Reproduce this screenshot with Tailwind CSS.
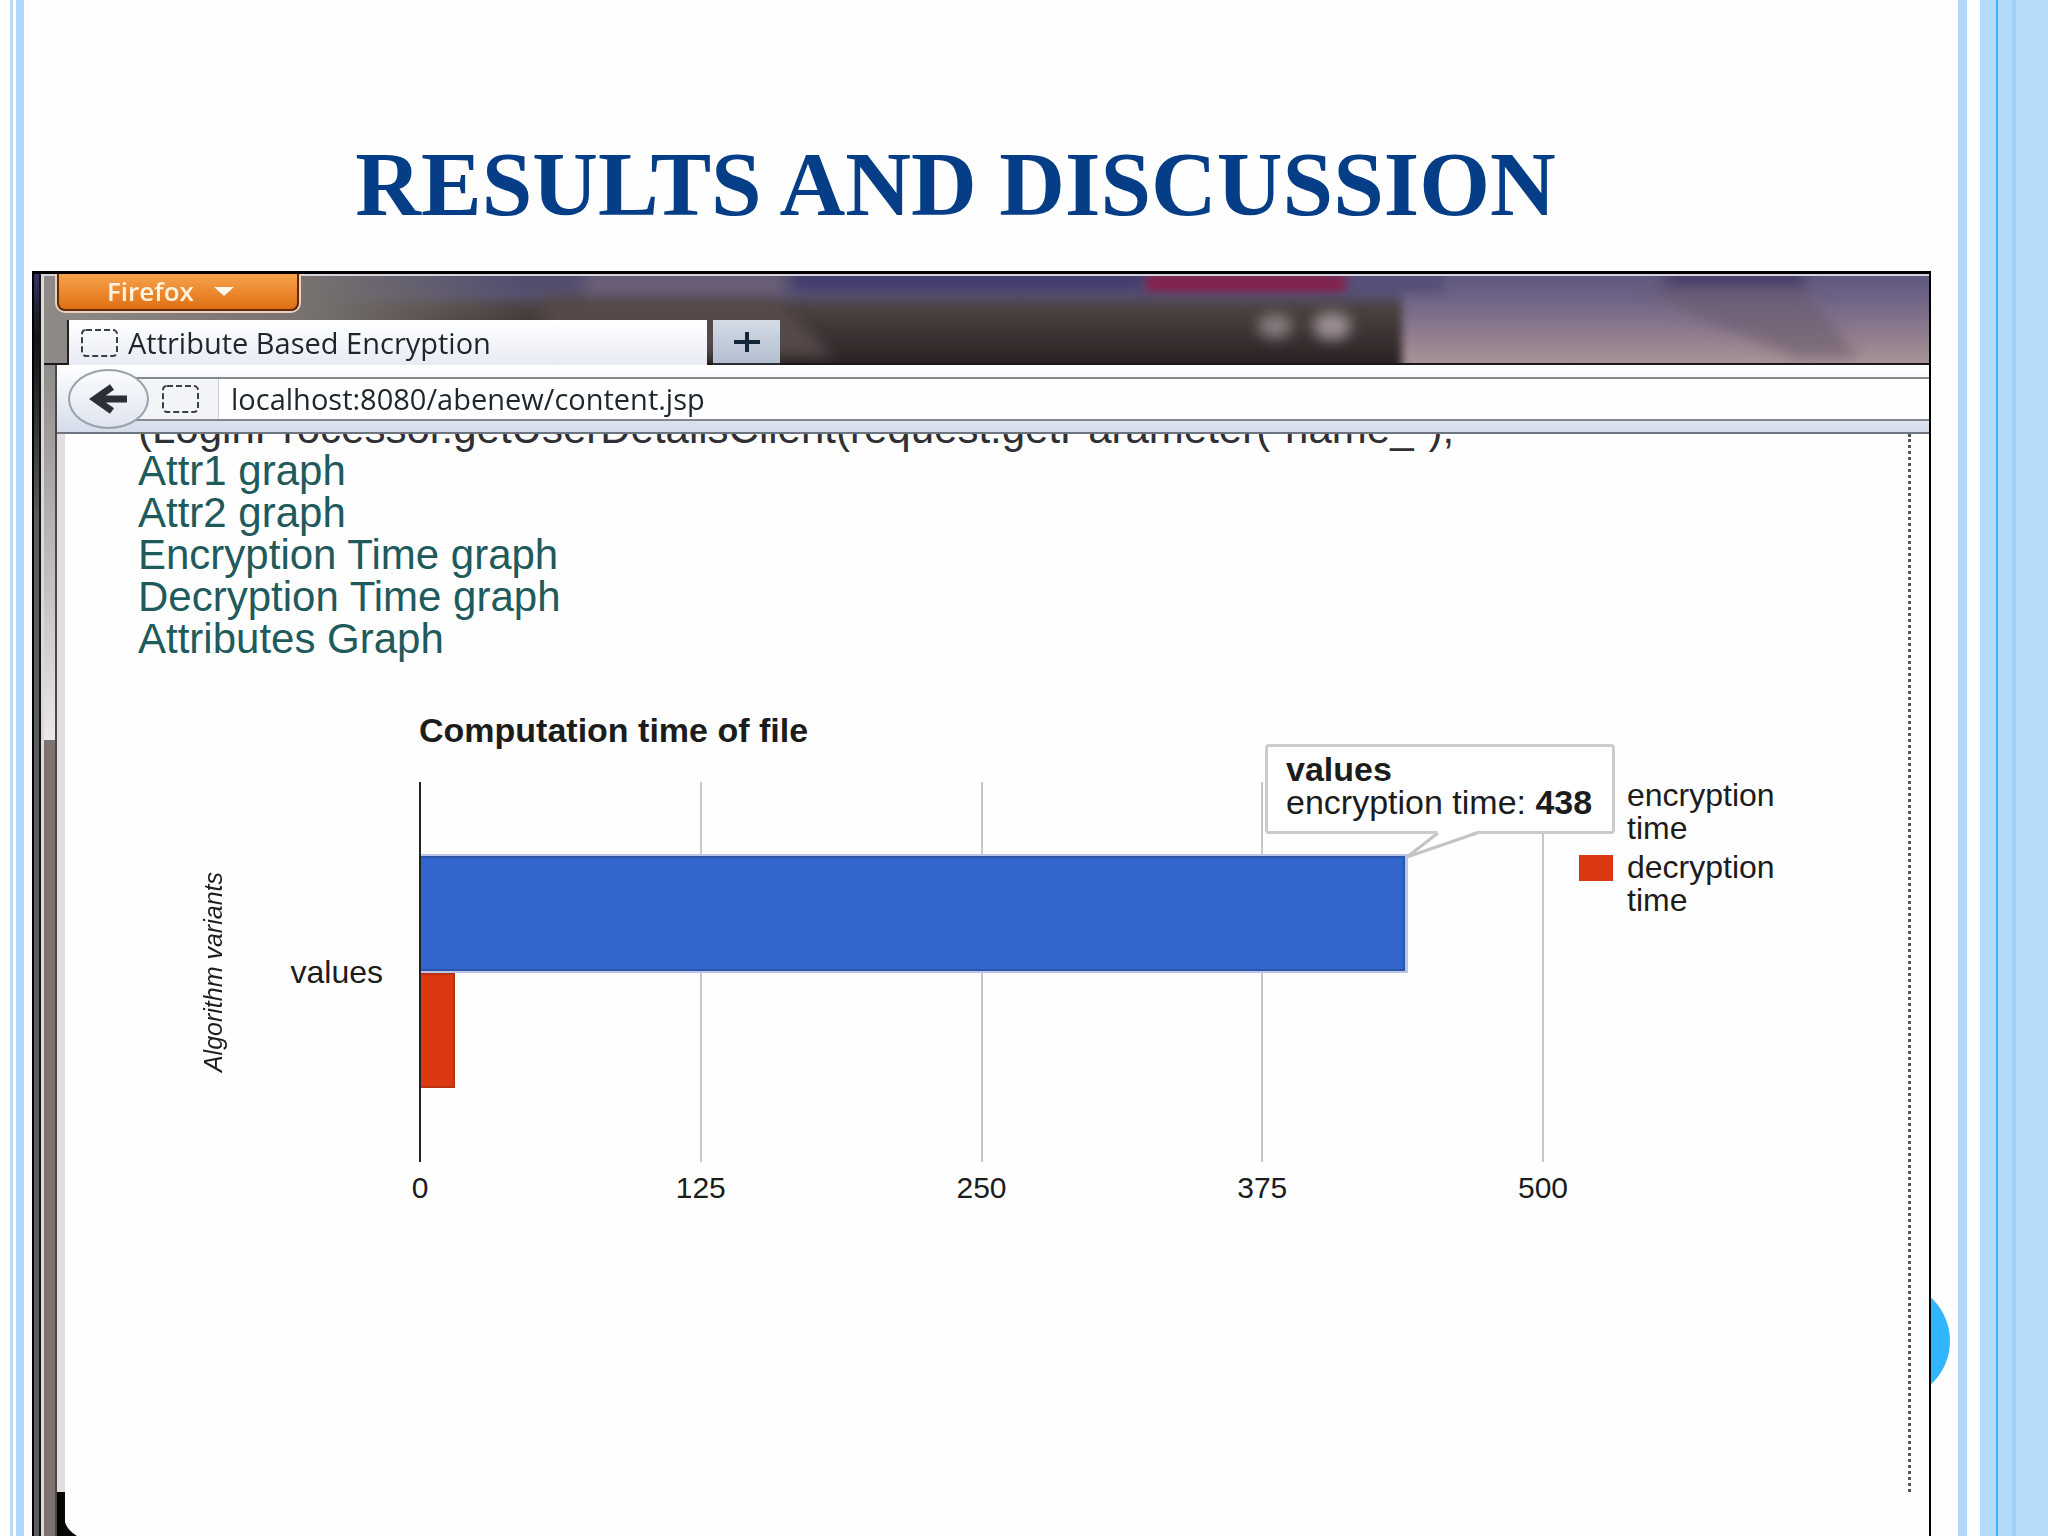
<!DOCTYPE html>
<html lang="en">
<head>
<meta charset="utf-8">
<meta name="viewport" content="width=device-width, initial-scale=1">
<title>Results and Discussion</title>
<script src="https://cdn.jsdelivr.net/npm/@tailwindcss/browser@4"></script>
</head>
<body class="bg-[#fefefe]">
<div class="flex h-screen overflow-hidden">
  <!-- left slide stripes -->
  <div class="flex w-6 shrink-0 justify-end gap-[3px]" aria-hidden="true">
    <div class="w-[3px] bg-[#b5dcfc]"></div>
    <div class="w-2 bg-[#b0d8fc]"></div>
  </div>

  <main class="relative flex min-w-0 flex-1 flex-col pl-2 pr-[27px]">
    <h1 class="h-[271px] shrink-0 pt-[140px] pr-[52px] text-center font-['Liberation_Serif',serif] text-[91px] leading-[90px] font-bold whitespace-nowrap text-[#053e87]">RESULTS AND DISCUSSION</h1>
    <div class="absolute top-[1282px] right-2 size-[118px] rounded-full bg-[#31b5ff]" aria-hidden="true"></div>

    <!-- browser window -->
    <section class="relative flex min-h-0 flex-1 overflow-hidden border-t-[3px] border-r-2 border-black bg-[#fefefe]">
      <div class="flex shrink-0" aria-hidden="true">
        <div class="w-[2px] bg-black"></div>
        <div class="w-[5px] bg-linear-to-b from-[#37335f] from-0% via-[#141418] via-5% to-[#5c5f60] to-20%"></div>
        <div class="w-[2px] bg-[#111]"></div>
        <div class="w-[3px] bg-[#dcdad8]"></div>
      </div>

      <div class="flex min-w-0 flex-1 flex-col">
        <header class="relative h-[91px] shrink-0 overflow-hidden">
          <!-- blurred glass behind the title bar -->
          <svg class="absolute inset-0 size-full" viewBox="0 0 1885 91" preserveAspectRatio="none" aria-hidden="true">
            <defs>
              <linearGradient id="glass" x1="0" y1="0" x2="0" y2="1"><stop offset="0" stop-color="#4f4c70"/><stop offset=".22" stop-color="#55506e"/><stop offset=".38" stop-color="#4a4240"/><stop offset="1" stop-color="#2a2022"/></linearGradient>
              <linearGradient id="dusk" x1="0" y1="0" x2="0" y2="1"><stop offset="0" stop-color="#575078"/><stop offset=".3" stop-color="#6b6284"/><stop offset=".55" stop-color="#8d7a8e"/><stop offset=".8" stop-color="#a99795"/><stop offset="1" stop-color="#b29493"/></linearGradient>
              <linearGradient id="left" x1="0" y1="0" x2="1" y2="0"><stop offset="0" stop-color="#8e8a88"/><stop offset=".55" stop-color="#77716f"/><stop offset="1" stop-color="#77716f" stop-opacity="0"/></linearGradient>
              <filter id="soft" x="-20%" y="-60%" width="140%" height="220%"><feGaussianBlur stdDeviation="7"/></filter>
              <filter id="edge" x="-5%" y="-30%" width="110%" height="160%"><feGaussianBlur stdDeviation="4"/></filter>
            </defs>
            <rect width="1885" height="91" fill="url(#glass)"/>
            <rect width="480" height="91" fill="url(#left)"/>
            <g filter="url(#soft)">
              <rect x="540" y="0" width="200" height="20" fill="#6d6078"/>
              <path d="M500 22h230l60 60H500z" fill="#55494a"/>
              <rect x="750" y="-6" width="350" height="20" fill="#403a70"/>
            </g>
            <rect x="1358" y="-20" width="600" height="140" fill="url(#dusk)" filter="url(#edge)"/>
            <rect x="1290" y="-10" width="110" height="28" fill="#575078" filter="url(#edge)"/>
            <g filter="url(#soft)">
              <path d="M1630-6h125l10 18h-150z" fill="#453a68"/>
              <path d="M1600 14h160l55 70h-60l-100-40z" fill="#6a5a6c" opacity=".6"/>
              <ellipse cx="1231" cy="52" rx="17" ry="12" fill="#8a7f80"/>
              <ellipse cx="1288" cy="52" rx="19" ry="14" fill="#9b8f92"/>
            </g>
            <rect x="1102" y="0" width="200" height="18" fill="#83204f" filter="url(#edge)"/>
            <rect y="0" width="1885" height="2" fill="#d6d2dc"/>
            <rect y="89" width="1885" height="2" fill="#1d1718"/>
          </svg>

          <div class="relative flex h-full flex-col justify-between pl-[13px]">
            <button class="flex h-[37px] w-[242px] items-center justify-start gap-5 rounded-b-lg border-2 border-t-0 border-[#5d2a12] bg-linear-to-b from-[#f6a24a] to-[#e0700c] pb-px pl-12 font-['Open_Sans',sans-serif] text-[26px] leading-[34px] font-semibold text-[#fff3e0] shadow-[0_0_0_2px_#f3cdb4]">Firefox
              <svg class="h-[9px] w-5" viewBox="0 0 20 9" aria-hidden="true"><path d="M0 0h20L10 9z" fill="#fff8ec"/></svg>
            </button>
            <div class="flex h-[45px] items-end gap-[6px] pl-[10px]">
              <button class="flex h-full w-[640px] items-center gap-[10px] border-l-2 border-[#222] bg-linear-to-b from-white to-[#e8ebf4] pl-3 font-['Open_Sans',sans-serif] text-[29px] leading-[36px] whitespace-nowrap text-[#1d262c]">
                <svg class="h-7 w-[37px]" viewBox="0 0 37 28" fill="none" aria-hidden="true"><rect x="1" y="1" width="35" height="26" rx="4" stroke="#3a3f46" stroke-width="2" stroke-dasharray="6 3"/></svg>
                Attribute Based Encryption
              </button>
              <button aria-label="New tab" class="flex h-[45px] w-[67px] items-center justify-center border-b-2 border-[#2b2b33] bg-linear-to-b from-[#d3dce6] to-[#b4bfd0]">
                <svg class="h-[20px] w-[26px]" viewBox="0 0 26 20" aria-hidden="true"><path d="M0 10h26M13 0v20" stroke="#14263a" stroke-width="4"/></svg>
              </button>
            </div>
          </div>
        </header>

        <div class="flex min-h-0 flex-1">
          <div class="flex w-[13px] shrink-0" aria-hidden="true">
            <div class="flex-1 bg-linear-to-b from-[#8f8c8a] from-0% via-[#ebe7ea] via-32% to-[#7d7270] to-32%"></div>
            <div class="w-[2px] bg-[#4d4648]"></div>
          </div>
          <div class="relative flex min-w-0 flex-1 flex-col">
            <nav class="relative h-[69px] shrink-0 border-b-2 border-[#6c7480] bg-linear-to-b from-white to-[#d5dcea] pt-3">
              <div class="ml-[76px] flex h-11 border-y-2 border-[#83888e] bg-[#fefefe]">
                <div class="flex w-[86px] items-center justify-end border-r border-[#c9ccd2] bg-[#f3f4f7] pr-[19px]">
                  <svg class="h-7 w-[37px]" viewBox="0 0 37 28" fill="none" aria-hidden="true"><rect x="1" y="1" width="35" height="26" rx="4" stroke="#3a3f46" stroke-width="2" stroke-dasharray="6 3"/></svg>
                </div>
                <input aria-label="Address" value="localhost:8080/abenew/content.jsp" class="min-w-0 flex-1 pl-3 font-['Open_Sans',sans-serif] text-[29px] leading-[36px] text-[#1d262c] outline-none">
              </div>
              <button aria-label="Back" class="absolute top-1 left-[11px] flex h-[60px] w-[81px] items-center justify-center rounded-[50%] border-2 border-[#9aa1ad] bg-linear-to-b from-[#fafbfd] to-[#dfe5f0]">
                <svg class="h-[30px] w-10" viewBox="0 0 40 30" fill="none" aria-hidden="true"><path d="M38 15H7M23 3L6 15l17 12" stroke="#2c2f36" stroke-width="7"/></svg>
              </button>
            </nav>

            <article class="relative flex-1 overflow-hidden border-l-8 border-[#e3dfe0] font-['Liberation_Sans',Arial,sans-serif]">
              <div class="absolute top-0 right-[18px] h-[1058px] border-r-[3px] border-dotted border-[#55555c]" aria-hidden="true"></div>

              <div class="-mt-[26px] pl-[73px] text-[42px] leading-[42px] whitespace-nowrap text-[#1f5a5c]">
                <p class="text-[#303034]">(LoginProcessor.getUserDetailsClient(request.getParameter("name_");</p>
                <ul>
                  <li><a href="#attr1">Attr1 graph</a></li>
                  <li><a href="#attr2">Attr2 graph</a></li>
                  <li><a href="#encryption">Encryption Time graph</a></li>
                  <li><a href="#decryption">Decryption Time graph</a></li>
                  <li><a href="#attributes">Attributes Graph</a></li>
                </ul>
              </div>

              <!-- bar chart -->
              <figure class="mt-[54px] pl-[130px] text-[32px] leading-[33px] text-[#1c1c1c]">
                <figcaption class="pl-[224px] text-[34px] font-bold whitespace-nowrap">Computation time of file</figcaption>
                <div class="mt-[35px] flex h-[380px]">
                  <div class="flex w-9 items-center justify-center">
                    <span class="rotate-180 text-[25px] italic whitespace-nowrap [writing-mode:vertical-rl]">Algorithm variants</span>
                  </div>
                  <div class="flex w-[188px] items-center justify-end pr-9">values</div>
                  <div class="relative min-w-0 flex-1">
                    <div class="absolute inset-0 flex justify-between" aria-hidden="true">
                      <div class="w-[2px] bg-[#222]"></div>
                      <div class="w-[2px] bg-[#c8c6ca]"></div>
                      <div class="w-[2px] bg-[#c8c6ca]"></div>
                      <div class="w-[2px] bg-[#c8c6ca]"></div>
                      <div class="w-[2px] bg-[#c8c6ca]"></div>
                    </div>
                    <div class="relative flex h-full flex-col justify-center gap-[2px] pl-[2px]">
                      <div class="h-[115px] border-2 border-l-0 border-[#2c55a8] bg-[#3366cc] shadow-[1px_0_0_2px_#b9c6ea]" style="width:87.6%"></div>
                      <div class="h-[115px] border-2 border-l-0 border-[#b8330f] bg-[#dc3912]" style="width:3%"></div>
                    </div>
                    <div class="absolute inset-y-0 left-0 w-[2px] bg-[#222]" aria-hidden="true"></div>
                    <div class="absolute -top-[38px] left-[846px] w-[350px]">
                      <div class="h-[90px] rounded-sm border-[3px] border-[#cbcacd] bg-white pt-[6px] pl-[18px] text-[34px] whitespace-nowrap">
                        <p class="font-bold">values</p>
                        <p>encryption time: <b>438</b></p>
                      </div>
                      <svg class="absolute top-[87px] left-[140px] h-[28px] w-[76px]" viewBox="0 0 76 28" aria-hidden="true"><path d="M33 0L2 26 72 0" fill="#fff"/><path d="M33 2L2 26 72 2" fill="none" stroke="#c4c3c6" stroke-width="3"/></svg>
                    </div>
                  </div>
                  <div class="-mt-[3px] w-[385px] pl-[35px]">
                    <ul class="flex flex-col gap-[6px]">
                      <li class="flex gap-[14px]"><span class="w-[34px] shrink-0"></span><span class="w-40">encryption time</span></li>
                      <li class="flex gap-[14px]"><span class="mt-1 h-[26px] w-[34px] shrink-0 bg-[#dc3912]"></span><span class="w-40">decryption time</span></li>
                    </ul>
                  </div>
                </div>
                <div class="mt-2 mr-[385px] ml-[224px] flex justify-between text-[30px] leading-[36px]">
                  <span class="flex w-[2px] justify-center">0</span>
                  <span class="flex w-[2px] justify-center">125</span>
                  <span class="flex w-[2px] justify-center">250</span>
                  <span class="flex w-[2px] justify-center">375</span>
                  <span class="flex w-[2px] justify-center">500</span>
                </div>
              </figure>
            </article>

            <!-- rounded window corner -->
            <svg class="absolute bottom-0 left-0 h-11 w-5" viewBox="0 0 20 44" aria-hidden="true"><path d="M0 0h8v30q2 8 12 14H0z" fill="#050805"/></svg>
          </div>
        </div>
      </div>
    </section>
  </main>

  <!-- right slide stripes -->
  <div class="flex w-[90px] shrink-0" aria-hidden="true">
    <div class="mr-[13px] w-[9px] bg-[#b3d7fb]"></div>
    <div class="w-4 bg-[#b5dafb]"></div>
    <div class="w-[2px] bg-[#36b3fc]"></div>
    <div class="w-[14px] bg-[#b3d9fb]"></div>
    <div class="w-1 bg-[#9fd2fb]"></div>
    <div class="flex-1 bg-[#b7dcfa]"></div>
  </div>
</div>
</body>
</html>
